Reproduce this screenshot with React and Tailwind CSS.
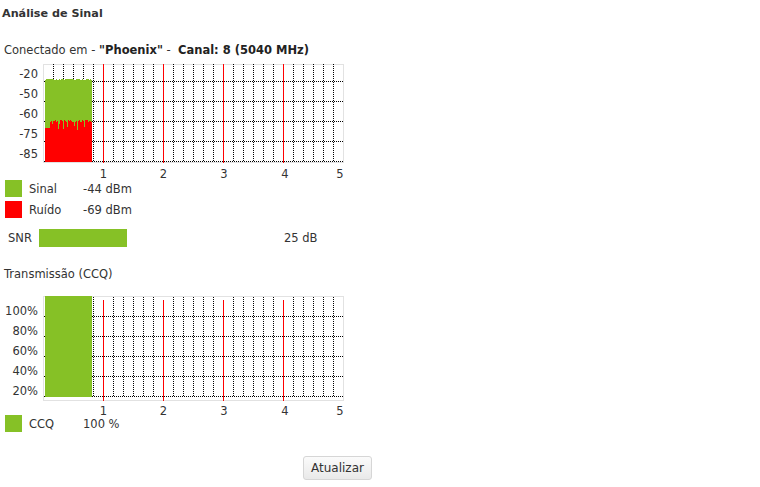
import React from 'react'

const GREEN = '#86c126'
const RED = '#ff0000'

// deterministic pseudo-random so the bars look noisy but stable
function rand(seed) {
  const x = Math.sin(seed * 12.9898) * 43758.5453
  return x - Math.floor(x)
}

const COLS = Array.from({ length: 47 }, (_, i) => {
  const x = 45 + i
  const sigTop = 79 + (rand(i + 1) > 0.7 ? 1 : 0) + (rand(i + 50) > 0.9 ? 1 : 0)
  let noiseTop = i < 5 ? 128 : 120 + Math.floor(rand(i + 9) * 3)
  const dip = rand(i + 23) > 0.78 ? 124 + Math.floor(rand(i + 77) * 7) : 0
  if (dip) noiseTop = Math.max(noiseTop, dip)
  return { x, sigTop, noiseTop }
})

const RED_X = [103, 163, 223, 283]
const DOT_X = Array.from({ length: 29 }, (_, i) => 53 + i * 10).filter((x) => !RED_X.includes(x))
const X_LABELS = [
  { t: '1', x: 103.5 },
  { t: '2', x: 163.5 },
  { t: '3', x: 224 },
  { t: '4', x: 285 },
  { t: '5', x: 340 },
]

function Grid({ top, frameTop, frameBottom, dotTop, dotBottom, redTop, rows }) {
  const o = (y) => y - top
  return (
    <g>
      <rect x="43.5" y={o(frameTop) + 0.5} width="300" height={frameBottom - frameTop} fill="none" stroke="#e2e2e2" />
      {DOT_X.map((x) => (
        <line key={x} x1={x + 0.5} x2={x + 0.5} y1={o(dotTop)} y2={o(dotBottom)} stroke="#000" strokeDasharray="1 1" />
      ))}
      {rows.map((y) => (
        <line key={y} x1="44" x2="344" y1={o(y) + 0.5} y2={o(y) + 0.5} stroke="#000" strokeDasharray="1 1" />
      ))}
      {RED_X.map((x) => (
        <line key={x} x1={x + 0.5} x2={x + 0.5} y1={o(redTop)} y2={o(frameBottom) + 1} stroke={RED} />
      ))}
    </g>
  )
}

function Labels({ top, yLabels, xY }) {
  return (
    <g fill="#333" fontSize="11.5" fontFamily="'DejaVu Sans', sans-serif">
      {yLabels.map(([t, y]) => (
        <text key={t} x="38" y={y - top + 4} textAnchor="end">{t}</text>
      ))}
      {X_LABELS.map((l) => (
        <text key={l.t} x={l.x} y={xY - top + 4} textAnchor="middle">{l.t}</text>
      ))}
    </g>
  )
}

function SignalChart() {
  const top = 60
  return (
    <svg width="350" height="120" className="block overflow-visible">
      <Grid top={top} frameTop={64} frameBottom={162} dotTop={64} dotBottom={162} redTop={64} rows={[81, 101, 121, 141, 161]} />
      {COLS.map((c) => (
        <g key={c.x}>
          <rect x={c.x} y={c.sigTop - top} width="1" height={162 - c.sigTop} fill={GREEN} />
          <rect x={c.x} y={c.noiseTop - top} width="1" height={162 - c.noiseTop} fill={RED} />
        </g>
      ))}
      <Labels top={top} xY={174} yLabels={[['-20', 74], ['-50', 94], ['-60', 114], ['-75', 134], ['-85', 154]]} />
    </svg>
  )
}

function CcqChart() {
  const top = 290
  return (
    <svg width="350" height="125" className="block overflow-visible">
      <Grid top={top} frameTop={296} frameBottom={400} dotTop={297} dotBottom={397} redTop={300} rows={[316, 336, 356, 376, 396]} />
      <rect x="45" y={296 - top} width="47" height="101" fill={GREEN} />
      <Labels top={top} xY={411} yLabels={[['100%', 311], ['80%', 331], ['60%', 351], ['40%', 371], ['20%', 391]]} />
    </svg>
  )
}

function LegendRow({ color, label, value }) {
  return (
    <div className="flex items-center h-[17px]">
      <span className="w-[17px] h-[17px] ml-[5px]" style={{ background: color }} />
      <span className="ml-[7px] w-[54px]">{label}</span>
      <span>{value}</span>
    </div>
  )
}

export default function App() {
  return (
    <div className="min-h-screen bg-white text-[11.5px] leading-4 text-[#333]" style={{ fontFamily: "'DejaVu Sans', Verdana, sans-serif" }}>
      <h2 className="pt-[6px] pl-[2px] font-bold text-[11.2px] text-[#333]">Análise de Sinal</h2>

      <p className="mt-[20px] pl-[4px] whitespace-pre">
        Conectado em - <b className="text-[#222]">"Phoenix"</b> -  <b className="text-[#222]">Canal: 8 (5040 MHz)</b>
      </p>

      <div className="mt-[2px]">
        <SignalChart />
      </div>

      <div className="flex flex-col gap-[4px]">
        <LegendRow color={GREEN} label="Sinal" value="-44 dBm" />
        <LegendRow color={RED} label="Ruído" value="-69 dBm" />
      </div>

      <div className="mt-[11px] flex items-center h-[18px]">
        <span className="ml-[8px] w-[31px]">SNR</span>
        <span className="w-[88px] h-[18px]" style={{ background: GREEN }} />
        <span className="ml-[157px]">25 dB</span>
      </div>

      <p className="mt-[19px] pl-[4px]">Transmissão (CCQ)</p>

      <div className="mt-[8px]">
        <CcqChart />
      </div>

      <LegendRow color={GREEN} label="CCQ" value="100 %" />

      <div className="mt-[24px] pl-[303px]">
        <button className="w-[69px] h-[24px] rounded-[3px] border border-[#d6d6d6] bg-gradient-to-b from-[#fbfbfb] to-[#e9e9e9] text-[#333] text-[12px]">
          Atualizar
        </button>
      </div>
    </div>
  )
}
